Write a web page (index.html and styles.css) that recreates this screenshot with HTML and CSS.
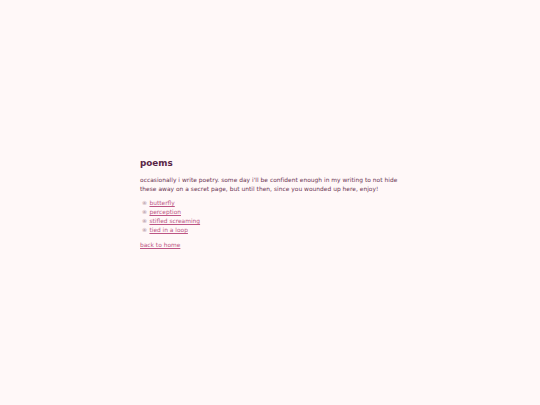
FILE: index.html
```html
<!DOCTYPE html>
<html>
<head>
<meta charset="utf-8">
<link rel="stylesheet" href="styles.css">
</head>
<body>
<main class="page">
  <h1 class="title">poems</h1>
  <p class="intro">occasionally i write poetry. some day i'll be confident enough in my writing to not hide these away on a secret page, but until then, since you wounded up here, enjoy!</p>
  <ul class="poems">
    <li><a href="#">butterfly</a></li>
    <li><a href="#">perception</a></li>
    <li><a href="#">stifled screaming</a></li>
    <li><a href="#">tied in a loop</a></li>
  </ul>
  <a class="back" href="#">back to home</a>
</main>
</body>
</html>
```
FILE: styles.css
```css
html, body {
  margin: 0;
  padding: 0;
  height: 100%;
}
body {
  background: #fff8f8;
  font-family: "DejaVu Sans", Verdana, sans-serif;
  font-size: 5.9px;
  line-height: 9px;
  color: #6b3352;
  display: flex;
  align-items: center;
  justify-content: center;
}
.page {
  width: 260px;
  padding-top: 2px;
}
.title {
  font-size: 8.8px;
  line-height: 12px;
  font-weight: bold;
  color: #5a2747;
  margin: 0 0 7px 0;
}
.intro {
  margin: 0 0 5px 0;
  letter-spacing: 0.03px;
}
.poems {
  list-style: none;
  margin: 0 0 6px 0;
  padding: 0 0 0 2px;
}
.poems li::before {
  content: "\2740";
  color: #c9b3bd;
  margin-right: 2.5px;
}
a {
  color: #bc5584;
  text-decoration: underline;
}
.back {
  display: inline-block;
}
```
